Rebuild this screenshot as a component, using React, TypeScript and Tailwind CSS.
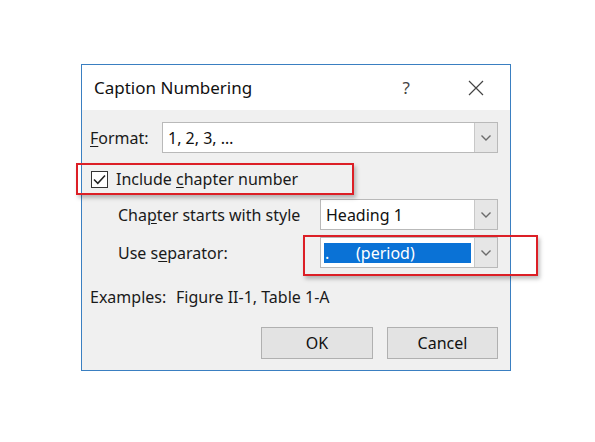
import React from "react";

const font = { fontFamily: '"Noto Sans", "Open Sans", sans-serif' };

const Chevron = () => (
  <svg width="12" height="8" viewBox="0 0 12 8" aria-hidden>
    <path d="M1.5 1.5 L6 6 L10.5 1.5" fill="none" stroke="#6b6b6b" strokeWidth="1.4" />
  </svg>
);

const Combo = ({
  value,
  selected = false,
  className = "",
}: {
  value: React.ReactNode;
  selected?: boolean;
  className?: string;
}) => (
  <div className={`flex h-[31px] border border-[#b9b9b9] bg-white ${className}`}>
    <div className="flex flex-1 items-center px-[3px] min-w-0">
      {selected ? (
        <div className="flex h-[20px] w-full items-center bg-[#0a72d6] pl-[1px] text-white">
          {value}
        </div>
      ) : (
        <span className="pl-[2px] text-[#111]">{value}</span>
      )}
    </div>
    <div className="flex w-[23px] items-center justify-center border-l border-[#c8c8c8] bg-[#e6e6e6]">
      <Chevron />
    </div>
  </div>
);

const U = ({ children }: { children: React.ReactNode }) => (
  <span className="underline underline-offset-2">{children}</span>
);

export default function App() {
  return (
    <div className="min-h-[442px] w-[595px] bg-white pt-[64px] pl-[81px]" style={font}>
      <div className="relative w-[430px] border border-[#3a7fc1] text-[16px] leading-[20px] text-[#1a1a1a]">
        {/* Title bar */}
        <div className="flex h-[45px] items-center bg-white pl-[12px]">
          <span className="text-[17px] text-[#111]">Caption Numbering</span>
          <span className="ml-auto mr-[58px] text-[17px] text-[#444]">?</span>
          <svg className="mr-[26px]" width="16" height="16" viewBox="0 0 16 16" aria-hidden>
            <path d="M1 1 L15 15 M15 1 L1 15" stroke="#444" strokeWidth="1.2" />
          </svg>
        </div>

        {/* Body */}
        <div className="bg-[#f0f0f0] pl-[8px] pr-[12px] pt-[12px] pb-[11px]">
          <div className="flex items-center">
            <span className="w-[72px]">
              <U>F</U>ormat:
            </span>
            <Combo value="1, 2, 3, …" className="flex-1" />
          </div>

          <div className="mt-[16px] flex h-[20px] items-center pl-[1px]">
            <div className="flex h-[17px] w-[17px] items-center justify-center border border-[#333] bg-white">
              <svg width="13" height="11" viewBox="0 0 13 11" aria-hidden>
                <path d="M1 5.5 L4.8 9.3 L12 1.5" fill="none" stroke="#222" strokeWidth="1.5" />
              </svg>
            </div>
            <span className="ml-[8px]">
              Include <U>c</U>hapter number
            </span>
          </div>

          <div className="mt-[10px] flex items-center pl-[28px]">
            <span className="w-[202px]">
              Cha<U>p</U>ter starts with style
            </span>
            <Combo value="Heading 1" className="flex-1" />
          </div>

          <div className="mt-[7px] flex items-center pl-[28px]">
            <span className="w-[202px]">
              Use s<U>e</U>parator:
            </span>
            <Combo
              selected
              value={
                <>
                  <span className="w-[31px]">.</span>
                  <span>(period)</span>
                </>
              }
              className="flex-1"
            />
          </div>

          <div className="mt-[19px] flex h-[20px] items-center">
            <span className="w-[86px]">Examples:</span>
            <span>Figure II-1, Table 1-A</span>
          </div>

          <div className="mt-[20px] flex justify-end gap-[14px]">
            <button className="h-[32px] w-[112px] border border-[#b0b0b0] bg-[#e3e3e3] text-[#111]">
              OK
            </button>
            <button className="h-[32px] w-[111px] border border-[#b0b0b0] bg-[#e3e3e3] text-[#111]">
              Cancel
            </button>
          </div>
        </div>

        {/* Annotation boxes */}
        <div className="pointer-events-none absolute left-[-6px] top-[98px] h-[32px] w-[278px] border-2 border-[#dc1f26] shadow-[2px_3px_4px_rgba(0,0,0,0.25)]" />
        <div className="pointer-events-none absolute left-[221px] top-[170px] h-[41px] w-[235px] border-2 border-[#dc1f26] shadow-[2px_3px_4px_rgba(0,0,0,0.25)]" />
      </div>
    </div>
  );
}
